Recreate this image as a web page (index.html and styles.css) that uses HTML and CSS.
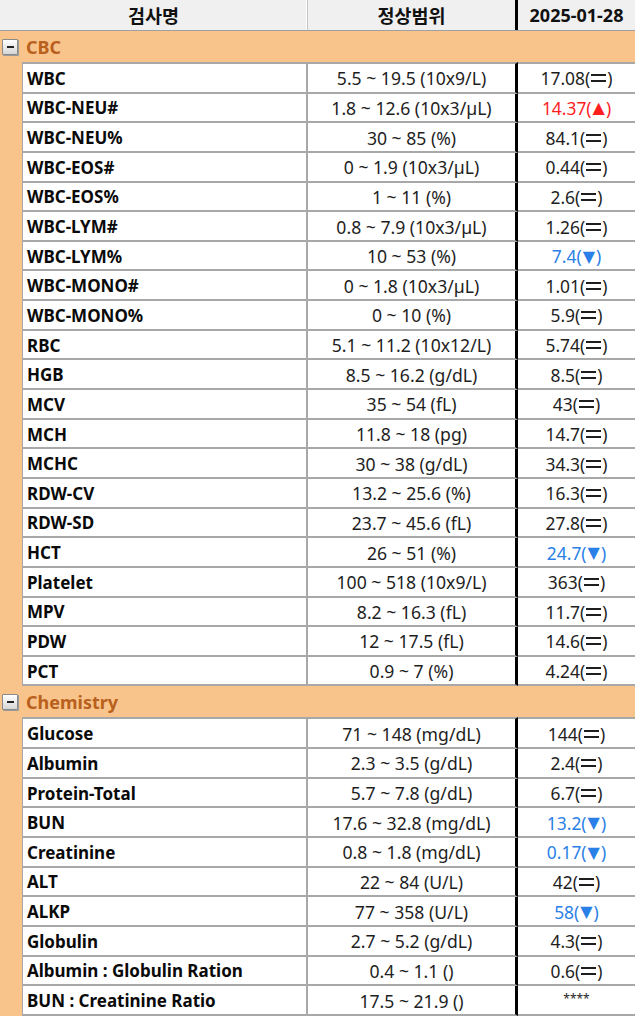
FILE: index.html
```html
<!DOCTYPE html>
<html lang="ko">
<head>
<meta charset="utf-8">
<title>검사결과</title>
<link rel="stylesheet" href="styles.css">
</head>
<body>
<div class="sheet">
  <div class="hdr">
    <div class="hc h1">검사명</div>
    <div class="hc h2">정상범위</div>
    <div class="hc h3">2025-01-28</div>
  </div>

  <div class="group"><span class="toggle"><span class="minus"></span></span><span class="gname">CBC</span></div>
  <div class="rows">
    <div class="row"><div class="ind"></div><div class="c1">WBC</div><div class="c2">5.5 ~ 19.5 (10x9/L)</div><div class="c3">17.08(<span class="eq"></span>)</div></div>
    <div class="row"><div class="ind"></div><div class="c1">WBC-NEU#</div><div class="c2">1.8 ~ 12.6 (10x3/µL)</div><div class="c3 up">14.37(<span class="tri">▲</span>)</div></div>
    <div class="row"><div class="ind"></div><div class="c1">WBC-NEU%</div><div class="c2">30 ~ 85 (%)</div><div class="c3">84.1(<span class="eq"></span>)</div></div>
    <div class="row"><div class="ind"></div><div class="c1">WBC-EOS#</div><div class="c2">0 ~ 1.9 (10x3/µL)</div><div class="c3">0.44(<span class="eq"></span>)</div></div>
    <div class="row"><div class="ind"></div><div class="c1">WBC-EOS%</div><div class="c2">1 ~ 11 (%)</div><div class="c3">2.6(<span class="eq"></span>)</div></div>
    <div class="row"><div class="ind"></div><div class="c1">WBC-LYM#</div><div class="c2">0.8 ~ 7.9 (10x3/µL)</div><div class="c3">1.26(<span class="eq"></span>)</div></div>
    <div class="row"><div class="ind"></div><div class="c1">WBC-LYM%</div><div class="c2">10 ~ 53 (%)</div><div class="c3 down">7.4(<span class="tri">▼</span>)</div></div>
    <div class="row"><div class="ind"></div><div class="c1">WBC-MONO#</div><div class="c2">0 ~ 1.8 (10x3/µL)</div><div class="c3">1.01(<span class="eq"></span>)</div></div>
    <div class="row"><div class="ind"></div><div class="c1">WBC-MONO%</div><div class="c2">0 ~ 10 (%)</div><div class="c3">5.9(<span class="eq"></span>)</div></div>
    <div class="row"><div class="ind"></div><div class="c1">RBC</div><div class="c2">5.1 ~ 11.2 (10x12/L)</div><div class="c3">5.74(<span class="eq"></span>)</div></div>
    <div class="row"><div class="ind"></div><div class="c1">HGB</div><div class="c2">8.5 ~ 16.2 (g/dL)</div><div class="c3">8.5(<span class="eq"></span>)</div></div>
    <div class="row"><div class="ind"></div><div class="c1">MCV</div><div class="c2">35 ~ 54 (fL)</div><div class="c3">43(<span class="eq"></span>)</div></div>
    <div class="row"><div class="ind"></div><div class="c1">MCH</div><div class="c2">11.8 ~ 18 (pg)</div><div class="c3">14.7(<span class="eq"></span>)</div></div>
    <div class="row"><div class="ind"></div><div class="c1">MCHC</div><div class="c2">30 ~ 38 (g/dL)</div><div class="c3">34.3(<span class="eq"></span>)</div></div>
    <div class="row"><div class="ind"></div><div class="c1">RDW-CV</div><div class="c2">13.2 ~ 25.6 (%)</div><div class="c3">16.3(<span class="eq"></span>)</div></div>
    <div class="row"><div class="ind"></div><div class="c1">RDW-SD</div><div class="c2">23.7 ~ 45.6 (fL)</div><div class="c3">27.8(<span class="eq"></span>)</div></div>
    <div class="row"><div class="ind"></div><div class="c1">HCT</div><div class="c2">26 ~ 51 (%)</div><div class="c3 down">24.7(<span class="tri">▼</span>)</div></div>
    <div class="row"><div class="ind"></div><div class="c1">Platelet</div><div class="c2">100 ~ 518 (10x9/L)</div><div class="c3">363(<span class="eq"></span>)</div></div>
    <div class="row"><div class="ind"></div><div class="c1">MPV</div><div class="c2">8.2 ~ 16.3 (fL)</div><div class="c3">11.7(<span class="eq"></span>)</div></div>
    <div class="row"><div class="ind"></div><div class="c1">PDW</div><div class="c2">12 ~ 17.5 (fL)</div><div class="c3">14.6(<span class="eq"></span>)</div></div>
    <div class="row"><div class="ind"></div><div class="c1">PCT</div><div class="c2">0.9 ~ 7 (%)</div><div class="c3">4.24(<span class="eq"></span>)</div></div>
  </div>

  <div class="group"><span class="toggle"><span class="minus"></span></span><span class="gname">Chemistry</span></div>
  <div class="rows">
    <div class="row"><div class="ind"></div><div class="c1">Glucose</div><div class="c2">71 ~ 148 (mg/dL)</div><div class="c3">144(<span class="eq"></span>)</div></div>
    <div class="row"><div class="ind"></div><div class="c1">Albumin</div><div class="c2">2.3 ~ 3.5 (g/dL)</div><div class="c3">2.4(<span class="eq"></span>)</div></div>
    <div class="row"><div class="ind"></div><div class="c1">Protein-Total</div><div class="c2">5.7 ~ 7.8 (g/dL)</div><div class="c3">6.7(<span class="eq"></span>)</div></div>
    <div class="row"><div class="ind"></div><div class="c1">BUN</div><div class="c2">17.6 ~ 32.8 (mg/dL)</div><div class="c3 down">13.2(<span class="tri">▼</span>)</div></div>
    <div class="row"><div class="ind"></div><div class="c1">Creatinine</div><div class="c2">0.8 ~ 1.8 (mg/dL)</div><div class="c3 down">0.17(<span class="tri">▼</span>)</div></div>
    <div class="row"><div class="ind"></div><div class="c1">ALT</div><div class="c2">22 ~ 84 (U/L)</div><div class="c3">42(<span class="eq"></span>)</div></div>
    <div class="row"><div class="ind"></div><div class="c1">ALKP</div><div class="c2">77 ~ 358 (U/L)</div><div class="c3 down">58(<span class="tri">▼</span>)</div></div>
    <div class="row"><div class="ind"></div><div class="c1">Globulin</div><div class="c2">2.7 ~ 5.2 (g/dL)</div><div class="c3">4.3(<span class="eq"></span>)</div></div>
    <div class="row"><div class="ind"></div><div class="c1">Albumin : Globulin Ration</div><div class="c2">0.4 ~ 1.1 ()</div><div class="c3">0.6(<span class="eq"></span>)</div></div>
    <div class="row"><div class="ind"></div><div class="c1">BUN : Creatinine Ratio</div><div class="c2">17.5 ~ 21.9 ()</div><div class="c3 stars">****</div></div>
  </div>
</div>
</body>
</html>
```

FILE: styles.css
```css
html, body {
  margin: 0;
  padding: 0;
  background: #ffffff;
}

body {
  font-family: "Noto Sans", "Noto Sans CJK KR", sans-serif;
  font-size: 17px;
  color: #111111;
  width: 635px;
  overflow: hidden;
}

.sheet {
  display: flex;
  flex-direction: column;
}

/* header */
.hdr {
  display: grid;
  grid-template-columns: 308px 210px 1fr;
  height: 31px;
  box-sizing: border-box;
  background: #f0f0f0;
  border-bottom: 1px solid #a0a0a0;
}

.hc {
  display: flex;
  align-items: center;
  justify-content: center;
  font-family: "Noto Sans CJK KR", "Noto Sans", sans-serif;
  font-weight: bold;
  font-size: 18.5px;
  color: #111111;
  box-sizing: border-box;
}

.h1 {
  border-right: 1px solid #c4c4c4;
  box-shadow: inset -1px 0 0 #ffffff;
}

.h2 {
  border-right: 3px solid #000000;
}

.h3 {
  font-family: "Noto Sans", sans-serif;
  font-size: 18px;
}

/* group row */
.group {
  display: flex;
  align-items: center;
  height: 31px;
  background: #f9c48c;
}

.toggle {
  display: flex;
  align-items: center;
  justify-content: center;
  width: 16px;
  height: 16px;
  margin-left: 2px;
  margin-right: 8px;
  box-sizing: border-box;
  border: 1px solid #8a8a8a;
  border-radius: 1px;
  background: linear-gradient(#ffffff, #d6d6d6);
  box-shadow: 1px 1px 0 #9a9a9a;
}

.minus {
  width: 7px;
  height: 2px;
  background: #222222;
}

.gname {
  font-weight: bold;
  font-size: 18px;
  color: #b8601c;
}

/* data rows */
.rows {
  display: flex;
  flex-direction: column;
}

.row {
  display: grid;
  grid-template-columns: 22px 286px 210px 1fr;
  height: 29.65px;
}

.rows .row:first-child {
  height: 31.65px;
}

.ind {
  background: #f9c48c;
}

.c1, .c2, .c3 {
  display: flex;
  align-items: center;
  box-sizing: border-box;
  background: #ffffff;
  border-bottom: 2px solid #a8a8a8;
  white-space: nowrap;
  padding-top: 1px;
}

.rows .row:first-child .c1,
.rows .row:first-child .c2,
.rows .row:first-child .c3 {
  border-top: 2px solid #a8a8a8;
}

.c1 {
  border-left: 1px solid #a8a8a8;
  border-right: 2px solid #a8a8a8;
  padding-left: 4px;
  font-weight: bold;
  color: #0a0a0a;
}

.c2 {
  justify-content: center;
  border-right: 3px solid #000000;
  color: #1e1e1e;
  font-size: 17.6px;
}

.c3 {
  justify-content: center;
  color: #1e1e1e;
  font-size: 17.4px;
}

.eq {
  display: inline-block;
  width: 15px;
  height: 8px;
  box-sizing: border-box;
  border-top: 2px solid currentColor;
  border-bottom: 2px solid currentColor;
  margin: 0 1px;
  position: relative;
  top: 0;
}

.tri {
  font-family: "DejaVu Sans", sans-serif;
  font-size: 16px;
  margin: 0 1px;
}

.up {
  color: #ff1e1e;
}

.down {
  color: #2a80e6;
}

.stars {
  font-size: 12px;
  padding-bottom: 5px;
}
```
